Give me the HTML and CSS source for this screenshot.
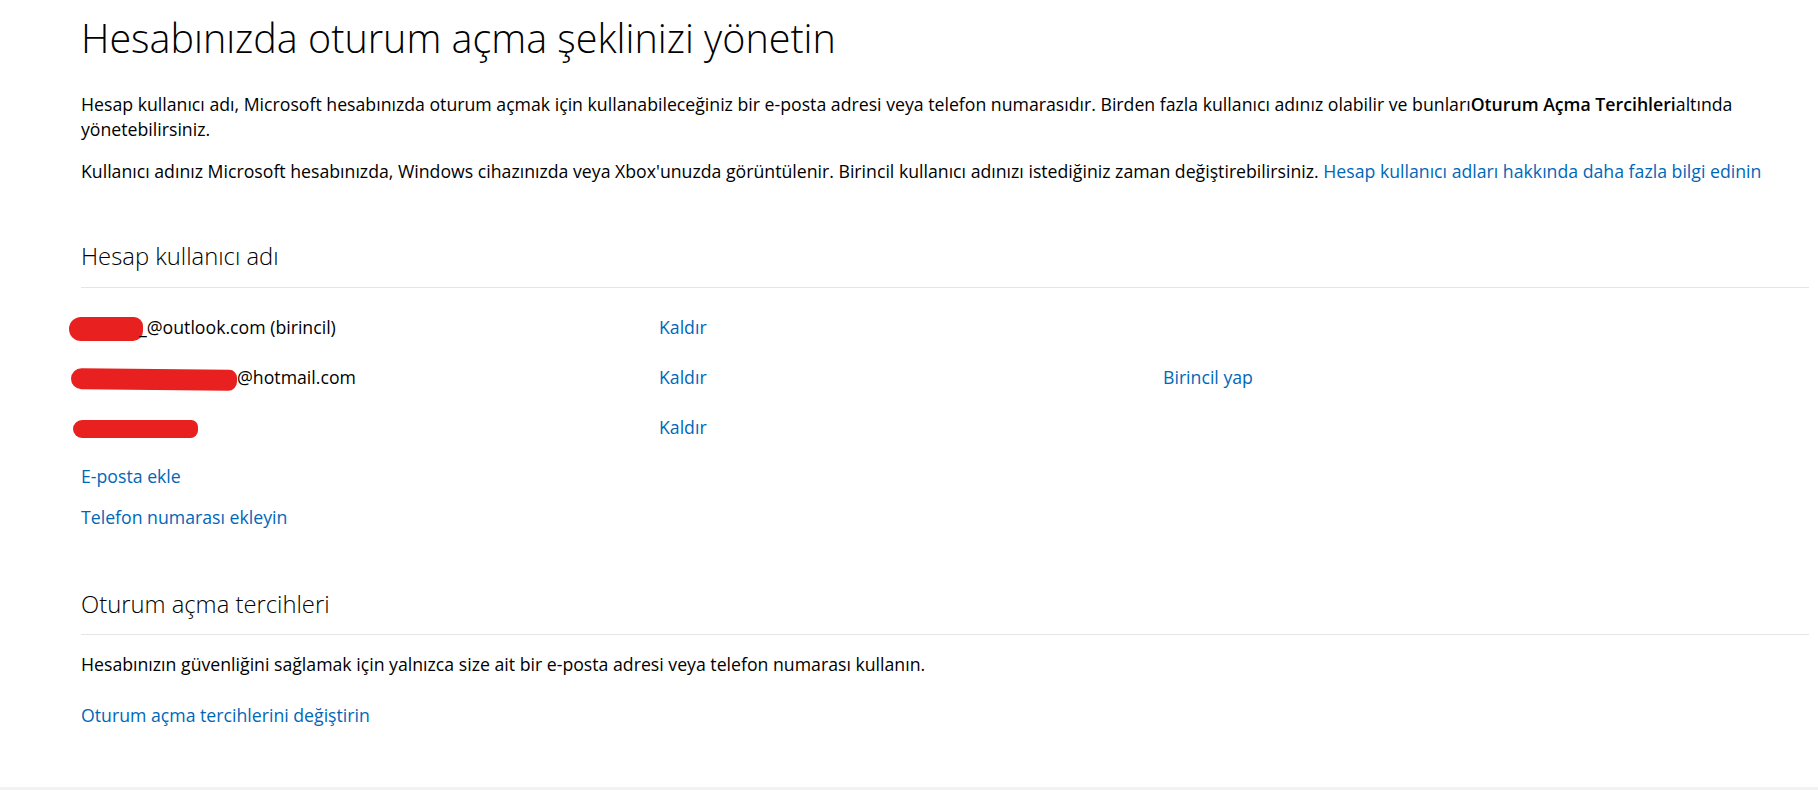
FILE: index.html
```html
<!DOCTYPE html>
<html lang="tr">
<head>
  <meta charset="UTF-8" />
  <meta name="viewport" content="width=device-width, initial-scale=1.0" />
  <title>Oturum açma şeklinizi yönetin</title>
  <link rel="stylesheet" href="styles.css">
</head>
<body>
  <div class="page-wrapper">
    <main class="content">
      <h1>Hesabınızda oturum açma şeklinizi yönetin</h1>

      <p class="intro">Hesap kullanıcı adı, Microsoft hesabınızda oturum açmak için kullanabileceğiniz bir e-posta adresi veya telefon numarasıdır. Birden fazla kullanıcı adınız olabilir ve bunları<strong>Oturum Açma Tercihleri</strong>altında yönetebilirsiniz.</p>
      <p class="intro second">Kullanıcı adınız Microsoft hesabınızda, Windows cihazınızda veya Xbox'unuzda görüntülenir. Birincil kullanıcı adınızı istediğiniz zaman değiştirebilirsiniz. <a href="#">Hesap kullanıcı adları hakkında daha fazla bilgi edinin</a></p>

      <section class="aliases">
        <h2>Hesap kullanıcı adı</h2>
        <div class="alias-list">
          <div class="alias-row">
            <span class="alias"><span class="redact redact-1"></span>_@outlook.com (birincil)</span>
            <a href="#">Kaldır</a>
            <span></span>
          </div>
          <div class="alias-row">
            <span class="alias"><span class="redact redact-2"></span>@hotmail.com</span>
            <a href="#">Kaldır</a>
            <a href="#">Birincil yap</a>
          </div>
          <div class="alias-row">
            <span class="alias"><span class="redact redact-3"></span></span>
            <a href="#">Kaldır</a>
            <span></span>
          </div>
        </div>
        <div class="add-links">
          <a href="#">E-posta ekle</a>
          <a href="#">Telefon numarası ekleyin</a>
        </div>
      </section>

      <section class="preferences">
        <h2>Oturum açma tercihleri</h2>
        <p>Hesabınızın güvenliğini sağlamak için yalnızca size ait bir e-posta adresi veya telefon numarası kullanın.</p>
        <a class="pref-link" href="#">Oturum açma tercihlerini değiştirin</a>
      </section>
    </main>

    <footer></footer>
  </div>
</body>
</html>
```

FILE: styles.css
```css
body {
  margin: 0;
  padding: 0;
  font-family: 'Open Sans', sans-serif;
  font-size: 17.7px;
  color: #000;
  background: #fff;
}
a {
  color: #0067b8;
  text-decoration: none;
}
.content {
  padding: 13px 9px 0 81px;
}
h1 {
  margin: 0;
  font-size: 39.5px;
  line-height: 50px;
  font-weight: 300;
}
p {
  margin: 0;
  line-height: 25px;
}
.intro {
  margin-top: 29px;
}
.intro.second {
  margin-top: 16.5px;
}
.intro strong {
  font-weight: 600;
}
h2 {
  margin: 0;
  font-size: 23.8px;
  line-height: 28px;
  font-weight: 350;
  padding-bottom: 17px;
  border-bottom: 1px solid #e5e5e5;
}
.aliases {
  margin-top: 58.5px;
}
.alias-list {
  margin-top: 14px;
}
.alias-row {
  display: grid;
  grid-template-columns: 578px 504px 1fr;
  line-height: 50px;
}
.redact {
  display: inline-block;
  vertical-align: middle;
  background: #e8201f;
  border-radius: 12px 9px 10px 12px;
}
.redact-1 {
  width: 74px;
  height: 24px;
  margin-left: -12px;
  margin-right: -4px;
}
.redact-2 {
  width: 166px;
  height: 21px;
  margin-left: -10px;
  transform: rotate(0.6deg);
}
.redact-3 {
  width: 125px;
  height: 18px;
  margin-left: -8px;
}
.add-links {
  margin-top: 4px;
  display: flex;
  flex-direction: column;
  align-items: flex-start;
  line-height: 41px;
}
.preferences {
  margin-top: 52px;
}
.preferences h2 {
  padding-bottom: 16px;
}
.preferences p {
  margin-top: 17px;
}
.pref-link {
  display: inline-block;
  margin-top: 27px;
  line-height: 23px;
}
footer {
  margin-top: 60px;
  height: 40px;
  background: #f2f2f2;
}
```
